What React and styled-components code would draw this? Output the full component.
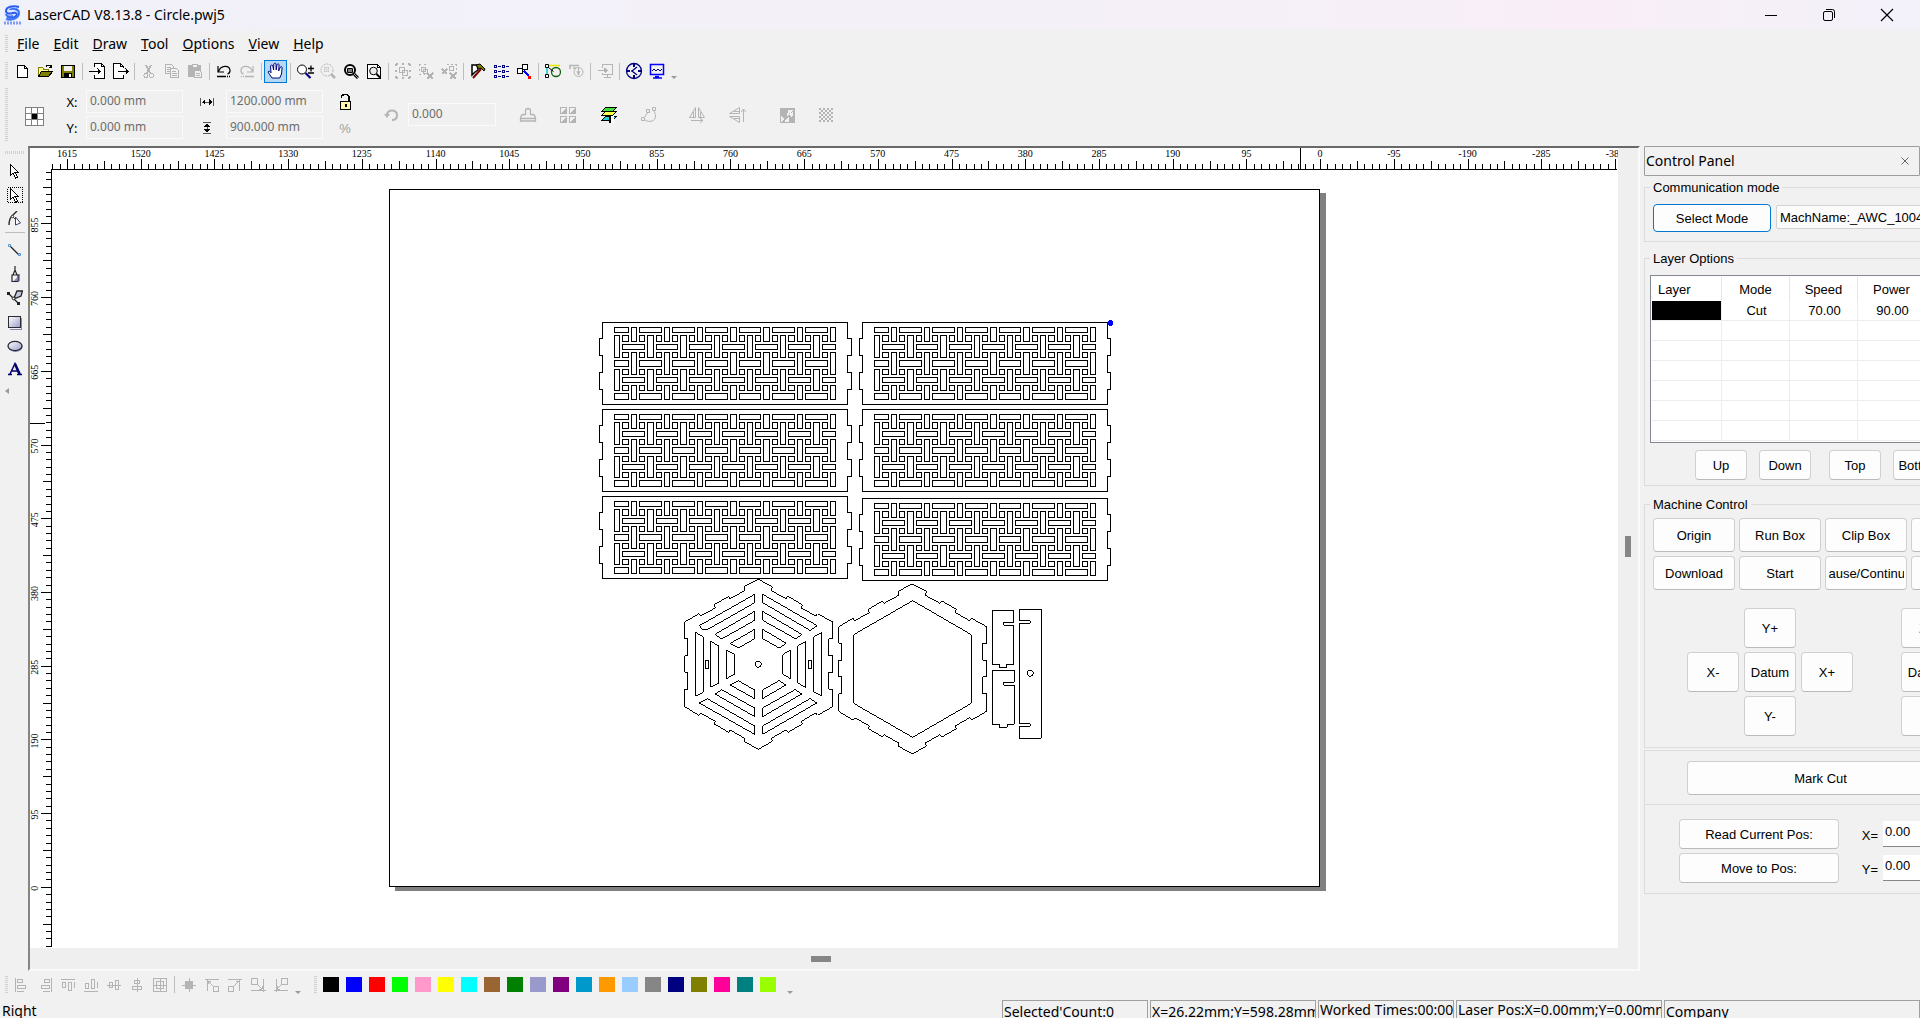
import React from "react";
import styled, { createGlobalStyle, css } from "styled-components";

const UI = `"Noto Sans", "Open Sans", sans-serif`;
const SANS = `"Liberation Sans", Arial, sans-serif`;
const SERIF = `"Liberation Serif", "Times New Roman", serif`;
const FACE = "#f1f1f1";
const OFF = "#b4b4b4";

const GlobalStyle = createGlobalStyle`
  *, *::before, *::after { box-sizing: border-box; }
  body { margin: 0; background: ${FACE}; font-family: ${UI}; font-size: 14px; color: #000; }
  button, input { font: inherit; color: inherit; }
`;

/* ---------- window shell ---------- */

const Window = styled.div`
  display: flex;
  flex-direction: column;
  height: 100vh;
  overflow: hidden;
`;

const TitleBar = styled.header`
  display: flex;
  align-items: center;
  height: 29px;
  flex: none;
  padding-right: 4px;
  background: linear-gradient(90deg, #f1f1f9 0%, #f5f0f8 65%, #f9eef7 83%, #f5f0f8 92%, #f3f1fa 100%);
`;

const AppTitle = styled.h1`
  margin: 0 auto 0 4px;
  font-size: 14px;
  line-height: 20px;
  font-weight: 400;
`;

const CaptionButton = styled.button`
  width: 58px;
  height: 29px;
  padding: 0;
  border: 0;
  background: none;
  display: grid;
  place-items: center;
`;

const LogoBox = styled.span`
  display: grid;
  padding: 2px 0 0 3px;
`;

const MenuBar = styled.nav`
  display: flex;
  align-items: center;
  height: 30px;
  flex: none;
  padding-left: 5px;
`;

const MenuList = styled.div`
  display: flex;
  padding-left: 2px;
`;

const MenuItem = styled.button`
  border: 0;
  background: none;
  padding: 0 7px;
  font-size: 14px;
  line-height: 22px;
`;

const Grip = styled.span`
  flex: none;
  ${(p) =>
    p.$flat
      ? css`
          width: 20px;
          height: 3px;
          margin-bottom: 5px;
          background: repeating-linear-gradient(90deg, #cfcfcf 0 1px, transparent 1px 2px);
        `
      : css`
          width: 3px;
          height: ${p.$size || 18}px;
          margin-right: ${p.$after || 0}px;
          background: repeating-linear-gradient(180deg, #cfcfcf 0 1px, transparent 1px 2px);
        `}
`;

const Toolbar = styled.div`
  display: flex;
  align-items: center;
  height: 24px;
  flex: none;
  padding-left: 5px;
`;

const ToolButton = styled.button`
  flex: none;
  width: 23px;
  height: 23px;
  padding: 0;
  display: grid;
  place-items: center;
  border: 1px solid ${(p) => (p.$on ? "#0078d7" : "transparent")};
  background: ${(p) => (p.$on ? "#b5d9f3" : "none")};
`;

const Divider = styled.span`
  flex: none;
  background: #bdbdbd;
  ${(p) => (p.$flat ? "width: 20px; height: 1px; margin: 1px 0 5px;" : "width: 1px; height: 17px; margin: 0 2px 0 3px;")}
`;

const More = styled.button`
  align-self: ${(p) => (p.$start ? "flex-start" : "flex-end")};
  width: 12px;
  height: 10px;
  margin: ${(p) => (p.$start ? "4px 0 0" : p.$after ? `0 ${p.$after}px 0 0` : "0")};
  padding: 0;
  border: 0;
  background: none;
  display: grid;
  place-items: center;
`;

/* ---------- property bar ---------- */

const PropertyBar = styled.div`
  display: flex;
  align-items: center;
  height: 63px;
  flex: none;
  padding-left: 5px;
`;

const AnchorGrid = styled.div`
  margin: 4px 17px 0;
  display: grid;
`;

const FieldGrid = styled.div`
  display: grid;
  grid-template-columns: ${(p) => p.$label}px 97px;
  grid-auto-rows: 23px;
  gap: 3px 0;
  align-items: center;
  margin-right: ${(p) => p.$after}px;
`;

const FieldLabel = styled.label`
  display: grid;
  place-items: center;
  font-size: 13px;
  line-height: 18px;
  padding-right: ${(p) => p.$pad || 0}px;
`;

const ValueField = styled.input`
  width: ${(p) => p.$width || 97}px;
  height: 23px;
  padding: 0 0 3px 3px;
  border: 1px solid #fafafa;
  background: #f0f0f0;
  color: #6d6d6d;
  font-size: 12px;
`;

const SideStack = styled.div`
  display: grid;
  justify-items: center;
  gap: 12px;
  width: 22px;
  margin-right: 28px;
  font-family: ${SANS};
  font-size: 13px;
  line-height: 14px;
  color: #a0a0a0;
`;

const RotateLabel = styled.label`
  display: grid;
  margin-right: 8px;
`;

const PropTools = styled.div`
  display: flex;
  align-items: center;
  padding-left: 20px;
`;

const PropButton = styled(ToolButton)`
  margin-right: ${(p) => p.$gap || 16}px;
`;

/* ---------- workspace ---------- */

const Workspace = styled.main`
  flex: 1;
  min-height: 0;
  display: grid;
  grid-template-columns: 28px minmax(0, 1fr) 280px;
`;

const ToolBox = styled.aside`
  display: flex;
  flex-direction: column;
  align-items: center;
  padding-top: 5px;
  padding-left: 1px;
`;

const BoxButton = styled(ToolButton)`
  height: 24px;
`;

const CanvasFrame = styled.section`
  display: grid;
  grid-template-columns: 22px minmax(0, 1fr) 20px;
  grid-template-rows: 22px minmax(0, 1fr) 21px;
  border: 2px solid;
  border-color: #696969 #fafafa #fafafa #858585;
  background: #efefef;
`;

const TopRuler = styled.div`
  grid-column: 1 / 3;
  overflow: hidden;
`;

const SideRuler = styled.div`
  grid-column: 1;
  min-height: 0;
  overflow: hidden;
`;

const Sheet = styled.div`
  grid-column: 2;
  min-height: 0;
  overflow: hidden;
`;

const Surface = styled.svg`
  display: block;
  width: 100%;
  height: 100%;
  background: #fff;
  shape-rendering: crispEdges;
`;

const RulerText = styled.text`
  font-family: ${SERIF};
  font-size: 10px;
  text-anchor: middle;
`;

const VScroll = styled.div`
  grid-column: 3;
  grid-row: 1 / 3;
  display: flex;
  flex-direction: column;
  align-items: center;
  &::before { content: ""; flex: 388; }
  &::after { content: ""; flex: 391; }
`;

const HScroll = styled.div`
  grid-column: 1 / 3;
  display: flex;
  align-items: center;
  &::before { content: ""; flex: 781; }
  &::after { content: ""; flex: 787; }
`;

const Thumb = styled.span`
  background: #868686;
  width: ${(p) => (p.$vertical ? 6 : 20)}px;
  height: ${(p) => (p.$vertical ? 21 : 6)}px;
`;

/* ---------- control panel ---------- */

const Panel = styled.aside`
  min-width: 0;
  overflow: hidden;
  padding-left: 4px;
  font-family: ${SANS};
  font-size: 13px;
`;

const PanelHeader = styled.div`
  display: flex;
  align-items: center;
  justify-content: space-between;
  height: 30px;
  margin-bottom: 2px;
  padding: 0 8px 0 1px;
  border: 1px solid #9d9d9d;
  border-radius: 1px;
`;

const PanelTitle = styled.h2`
  margin: 0;
  font-family: ${UI};
  font-size: 14px;
  line-height: 20px;
  font-weight: 400;
`;

const CloseButton = styled.button`
  width: 12px;
  height: 12px;
  padding: 0;
  border: 0;
  background: none;
  display: grid;
  place-items: center;
`;

const Group = styled.fieldset`
  width: 352px;
  min-width: 0;
  margin: 0 0 ${(p) => p.$after}px;
  padding: ${(p) => p.$pad};
  border: 1px solid #dcdcdc;
`;

const Legend = styled.legend`
  height: 18px;
  line-height: 20px;
  padding: 0 3px;
  margin-left: ${(p) => (p.$flush ? 0 : -3)}px;
`;

const PlainGroup = styled.div`
  width: 352px;
  padding: ${(p) => p.$pad};
  border: 1px solid #dcdcdc;
  border-bottom-width: ${(p) => (p.$open ? 0 : 1)}px;
`;

const Row = styled.div`
  display: flex;
  align-items: flex-start;
  gap: ${(p) => p.$gap || 4}px;
  padding: ${(p) => p.$pad || 0};
`;

const PushButton = styled.button`
  flex: none;
  display: flex;
  align-items: center;
  justify-content: center;
  width: ${(p) => p.$w}px;
  height: ${(p) => p.$h}px;
  padding: 1px 0 0;
  overflow: hidden;
  white-space: nowrap;
  line-height: 18px;
  border: 1px solid ${(p) => (p.$focus ? "#0078d4" : "#d0d0d0")};
  border-bottom-color: ${(p) => (p.$focus ? "#0078d4" : "#bababa")};
  border-radius: 4px;
  background: #fdfdfd;
`;

const TightLabel = styled.span`
  display: flex;
  justify-content: center;
  width: 76px;
  overflow: hidden;
`;

const MachineName = styled.input`
  flex: none;
  width: 180px;
  height: 24px;
  margin-top: 1px;
  padding: 0 3px;
  border: 1px solid #d2d2d2;
  border-radius: 2px;
  background: #fbfbfb;
`;

const LayerBox = styled.div`
  width: 290px;
  height: 168px;
  margin-bottom: 7px;
  padding: 1px;
  border: 1px solid #828790;
  background: #fff;
`;

const LayerTable = styled.table`
  width: 274px;
  table-layout: fixed;
  border-collapse: separate;
  border-spacing: 0;
`;

const Head = styled.th`
  width: ${(p) => p.$w}px;
  height: 24px;
  padding: ${(p) => (p.$left ? "0 0 0 6px" : "0")};
  text-align: ${(p) => (p.$left ? "left" : "center")};
  font-weight: 400;
  border-right: 1px solid #e5e5e5;
`;

const Cell = styled.td`
  height: 20px;
  padding: 1px 0 0 2px;
  line-height: 18px;
  text-align: center;
  border-right: 1px solid #ededed;
  border-bottom: 1px solid #ededed;
  background: ${(p) => (p.$ink ? "#000" : "#fff")};
`;

const JogArea = styled.div`
  display: flex;
  gap: 48px;
  padding: 14px 0 0 34px;
`;

const JogPad = styled.div`
  display: grid;
  grid-template-columns: repeat(${(p) => p.$cols}, 52px);
  grid-template-rows: repeat(3, 40px);
  gap: 4px 5px;
  > :nth-child(1) { grid-column: ${(p) => (p.$cols === 3 ? 2 : 1)}; }
  > :nth-child(2) { grid-column: 1; }
  > :nth-child(5) { grid-column: 2; }
`;

const Rows = styled.div`
  display: grid;
  gap: 4px;
`;

const PosRow = styled.div`
  display: flex;
  align-items: center;
`;

const PosLabel = styled.label`
  width: 44px;
  padding: 4px 5px 0 0;
  text-align: right;
  line-height: 18px;
`;

const PosInput = styled.input`
  width: 80px;
  height: 26px;
  padding: 0 2px 5px;
  border: 0;
  border-bottom: 1px solid #868686;
  background: #fff;
`;

/* ---------- bottom ---------- */

const BottomBar = styled.div`
  display: flex;
  align-items: center;
  height: 29px;
  flex: none;
  padding: 0 0 2px 5px;
`;

const Swatches = styled.div`
  display: flex;
  gap: 7px;
  padding: 0 8px 0 6px;
`;

const Swatch = styled.button`
  width: 16px;
  height: 15px;
  padding: 0;
  border: 0;
  background: ${(p) => p.$color};
`;

const StatusBar = styled.footer`
  display: grid;
  grid-template-columns: minmax(0, 1fr) 146px 166px 136px 206px 256px;
  gap: 2px;
  height: 18px;
  flex: none;
  overflow: hidden;
  font-size: 14px;
  line-height: 22px;
`;

const StatusCell = styled.span`
  height: 24px;
  overflow: hidden;
  white-space: nowrap;
  padding-left: 1px;
  border: 1px solid ${(p) => (p.$bare ? "transparent" : "#a0a0a0")};
  ${(p) => p.$raised && "line-height: 18px;"}
  ${(p) => p.$bare && "line-height: 19px;"}
`;

/* ---------- icons ---------- */

function Icon({ size = 16, children, stroke = "#000", smooth }) {
  return (
    <svg
      width={size}
      height={size}
      viewBox={`0 0 ${size} ${size}`}
      fill="none"
      stroke={stroke}
      shapeRendering={smooth ? "auto" : "crispEdges"}
      aria-hidden="true"
    >
      {children}
    </svg>
  );
}

const down = (
  <svg width="6" height="4" viewBox="0 0 6 4" aria-hidden="true"><path d="M0 0h6L3 3z" fill="#9a9a9a" /></svg>
);

const CURSOR = "M3.5 1.5v11l2.5-2.5 2.5 5 2-1-2.500-4.500h3.500z";

const ICONS = {
  new: <Icon><path d="M3.5 2.500h7l3 3v9h-10z" fill="#fff" /><path d="M10.500 2.500v3h3" /></Icon>,
  open: (
    <Icon>
      <path d="M1.500 13.500v-9h4l1 1.500h5v3" fill="#ffff9c" stroke="#808000" />
      <path d="M1.500 13.500l3-5h11l-4 5z" fill="#808000" />
      <path d="M9 3.500l2-1.500h2l1.500 2M14.500 1.500v3h-3" />
    </Icon>
  ),
  save: (
    <Icon>
      <rect x="1.500" y="2.500" width="13" height="12" fill="#808000" />
      <rect x="4" y="3" width="8" height="5" fill="#f1f1f1" stroke="none" />
      <rect x="4" y="10" width="8" height="4" fill="#000" stroke="none" />
      <rect x="9" y="11" width="2" height="3" fill="#fff" stroke="none" />
    </Icon>
  ),
  import: <Icon size={18}><path d="M6.500 5V1.500h7l3 3v12h-10V13" fill="#fff" /><path d="M13.500 1.500v3h3M1 9.500h11M9.500 6.500l3 3-3 3M10.500 7.500v4" /></Icon>,
  export: <Icon size={18}><path d="M12.500 6V4.500l-3-3h-7v15h10V13" fill="#fff" /><path d="M9.500 1.500v3h3M7 9.500h10M14.500 6.500l3 3-3 3M15.500 7.500v4" /></Icon>,
  cut: <Icon stroke={OFF}><path d="M5 2l4 8M10 2l-4 8" strokeWidth="1.5" /><circle cx="5" cy="12.500" r="2" /><circle cx="10.500" cy="12.500" r="2" /></Icon>,
  copy: <Icon stroke={OFF}><path d="M1.500 1.500h6l2 2v7h-8zM3 4.500h4M3 6.500h5M3 8.500h5" /><path d="M6.500 5.500h6l2 2v7h-8z" fill={FACE} /><path d="M8 8.500h4M8 10.500h5M8 12.500h5" /></Icon>,
  paste: <Icon stroke={OFF}><path d="M1.500 2.500h12v11h-12z" fill={OFF} /><path d="M5 1.500h5v3H5z" fill={FACE} /><path d="M7.500 7.500h5l2 2v5h-7z" fill={FACE} /><path d="M9 10.500h4M9 12.500h4" /></Icon>,
  undo: <Icon smooth><path d="M2 3v6h6M2.500 8.500C5 2 13 2 14 7c.3 2.500-1 3.500-2.500 4" strokeWidth="1.200" /><path d="M1 13.500h9M11 13.500h1M13 13.500h1" strokeWidth="1.500" /></Icon>,
  redo: <Icon smooth stroke={OFF}><path d="M14 3v6H8M13.500 8.500C11 2 3 2 2 7c-.3 2.500 1 3.500 2.500 4" strokeWidth="1.200" /><path d="M6 13.500h9M4 13.500h1M2 13.500h1" strokeWidth="1.500" /></Icon>,
  pan: (
    <Icon size={18} stroke="#00007c" smooth>
      <path d="M5 16c-1-2-3-4-4-6 .5-1.500 2-.8 3 .8L3.500 4c.8-1.500 2-1 2.300 0l.8 4L6.800 2c.8-1.300 2-1 2.200 0l.2 6 .9-5.500c.9-1 2-.6 2 .5l-.5 6 1.800-4c1-.8 1.800-.2 1.700.8L14.500 12l-1.800 4z" fill="#fff" />
    </Icon>
  ),
  zoom: <Icon size={18} smooth><circle cx="6" cy="7.500" r="4.500" fill="#fff" /><path d="M9.500 11l5 5" stroke="#000080" strokeWidth="2.200" /><path d="M12 6.500h6M15 3.500v6M12 11h6" strokeWidth="1.300" /></Icon>,
  zoomSel: <Icon smooth stroke={OFF}><circle cx="7" cy="7" r="6" strokeDasharray="2 1" /><path d="M4 5h6M4 8h6M5 4v6M8 4v6" strokeDasharray="1 1" /><path d="M11 11l4 4" strokeWidth="2.500" /></Icon>,
  zoomObj: <Icon smooth><circle cx="7" cy="7" r="5" fill="#fff" strokeWidth="2" /><path d="M4.500 5.500h5v4h-5z" fill="#808080" /><path d="M11 11l4 4" strokeWidth="3" /><path d="M11 11l4 4" stroke="#aaa" strokeWidth="1" /></Icon>,
  zoomPage: <Icon><path d="M1.500 1.500h10l3 3v11h-13z" fill="#fff" /><path d="M11.500 1.500v3h3" /><g shapeRendering="auto"><circle cx="7.500" cy="8" r="3.800" fill="#eee" /><path d="M10.500 11l3.500 3.500" strokeWidth="2" /></g></Icon>,
  group: <Icon stroke={OFF}><path d="M4.500 4.500h5v5h-5zM7.500 7.500h5v5h-5z" /><path d="M1 1h14M1 15h14M1 1v14M15 1v14" strokeWidth="2" strokeDasharray="2 4" /></Icon>,
  ungroup: <Icon stroke={OFF}><path d="M3.500 4.500h4v4h-4zM5.500 6.500h4v4h-4z" /><path d="M1 1.500h10M1.500 1v10M1 11.500h6" strokeDasharray="2 3" /><path d="M9 10l6 6M15 10l-6 6" strokeWidth="2" /></Icon>,
  ungroupAll: <Icon stroke={OFF}><path d="M8.500 3.500h4v4h-4z" /><path d="M6 1.500h10M15.500 1v10" strokeDasharray="2 2" /><path d="M1 6l5 5M6 6l-5 5M9 10l6 6M15 10l-6 6" strokeWidth="1.800" /></Icon>,
  hammer: <Icon smooth><path d="M2 2v10l3-3 3-2-1-5z" fill="#fff" strokeWidth="1.500" /><path d="M3 15L11 6" stroke="#800000" strokeWidth="2" /><path d="M6 2l4-1 5 5-1 2-3-3-2 1z" fill="#808000" /></Icon>,
  list: <Icon stroke="#000080"><path d="M1.500 2.500h2v2h-2zM1.500 7.500h2v2h-2zM1.500 12.500h2v2h-2zM9.500 2.500h2v2h-2zM9.500 7.500h2v2h-2zM9.500 12.500h2v2h-2z" /><path d="M5 3.500h3M5 8.500h3M5 13.500h3M13 3.500h3M13 8.500h3M13 13.500h3" /></Icon>,
  nodes: <Icon><path d="M6.500 1.500h5v5h-5zM1.500 5.500h5v5h-5z" fill="#fff" /><path d="M8 8l5 5" stroke="#00f" strokeWidth="1.500" /><path d="M12 13h3v3h-3z" fill="red" stroke="none" /></Icon>,
  path: <Icon size={18} smooth><circle cx="12" cy="10" r="4.500" stroke="#106010" strokeWidth="1.300" /><path d="M3 3.500h13" stroke="#e8e800" strokeWidth="1.500" /><path d="M3 6v7" stroke="#0cc" strokeWidth="1.500" /><path d="M1.500 2.500h3v3h-3zM1.500 12.500h3v3h-3z" fill="#fff" /><path d="M4.500 5.500l5 4" /></Icon>,
  timer: <Icon stroke={OFF} smooth><path d="M1 2.500h10M2 2v4M5 5h3" strokeWidth="1.500" /><circle cx="10.500" cy="9" r="4.500" /><path d="M10.500 5v6M9 8l1.500 4L12 8" /></Icon>,
  screenIn: <Icon stroke={OFF}><path d="M5.500 5V1.500h10v10h-10V10M1 7.500h8M7.500 5.500l2 2-2 2M10.500 12v2M7 14.500h7" strokeWidth="1.500" /></Icon>,
  target: <Icon size={18} smooth stroke="#000080"><circle cx="9" cy="9" r="7.500" strokeWidth="1.300" /><path d="M9 1v4M9 13v4M1 9h4M13 9h4" strokeWidth="2" /><path d="M7 9l5-4M7 9l5 4M7 8v2" strokeWidth="1.300" /></Icon>,
  monitor: <Icon stroke="#00f" smooth><path d="M1.500 1.500h13v10h-13z" strokeWidth="1.500" /><path d="M3 8l2-2 2 2 2-2 2 2 2-2" stroke="#000080" /><path d="M6 13.500h4M4 15h9" strokeWidth="1.500" /></Icon>,
  stamp: <Icon size={18} smooth stroke={OFF}><path d="M6.500 8.500V5a2.500 2.500 0 0 1 5 0v3.500h2c2.500 0 3 4 3 4h-15s.500-4 3-4zM1.500 12.500v2.500h15v-2.500" strokeWidth="1.300" /></Icon>,
  array: <Icon size={18} stroke={OFF}>{[[1, 1], [10, 1], [1, 10], [10, 10]].map(([x, y]) => <g key={`${x}-${y}`}><rect x={x + 0.5} y={y + 0.5} width="6" height="6" /><path d={`M${x} ${y + 7}l7-7v7z`} fill={OFF} stroke="none" /></g>)}</Icon>,
  layers: (
    <Icon size={18}>
      <path d="M5.500 1.500h11l-4 4h-11z" fill="#40e040" />
      <path d="M5.500 5.500h11l-4 4h-11z" fill="#ffff50" />
      <path d="M5.500 10.500h11l-4 4h-11z" fill="#20d0d0" />
      <path d="M9.500 9v8" strokeWidth="2" /><path d="M11 10h3v7h-3z" fill="#fff" stroke="none" />
    </Icon>
  ),
  rotateNode: <Icon size={18} smooth stroke={OFF}><path d="M1.500 11.500h3v3h-3zM12.500 1.500h3v3h-3zM6.500 3.500h3v3h-3zM5 14c4 3 11 1 10.500-4 0-2-1-4-1.500-5M5 11c1-3 3-5 5-5" /></Icon>,
  flipH: <Icon size={18} smooth stroke={OFF}><path d="M7.500 1.500v10h-6zM10.500 1.500v10h6zM5.500 6v5M12.500 6v5M3 14.500h12M12 12l3 2.500-3 2.500" /></Icon>,
  flipV: <Icon size={18} smooth stroke={OFF}><path d="M1.500 7.500h10v-6zM1.500 10.500h10v6zM6 5.500h5M6 12.500h5M15.500 16V3M13 6l2.500-3L18 6" /></Icon>,
  invert: <Icon stroke={OFF}><path d="M1 1h14v14H1z" fill={OFF} /><path d="M9 3h5l-6 6zM2 9l3 3-3 3zM7 12l3-2v5H6zM9 7l3 3 2-1V5z" fill={FACE} stroke="none" /></Icon>,
  checker: (
    <Icon>
      {Array.from({ length: 49 }, (_, i) => i).filter((i) => i % 2 === 0).map((i) => (
        <rect key={i} x={1 + (i % 7) * 2} y={1 + Math.floor(i / 7) * 2} width="2" height="2" fill={OFF} stroke="none" />
      ))}
    </Icon>
  ),
  arrow: <Icon><path d={CURSOR} fill="#fff" /></Icon>,
  marquee: <Icon><path d="M.5.500h15v15H.500z" strokeDasharray="1 1" /><path d={CURSOR} fill="#fff" /></Icon>,
  nodeEdit: <Icon smooth stroke="#333"><path d="M2 14c0-4 1-7 3-9l5-5" strokeWidth="1.500" /><path d="M5 5l5 5" /><path d="M8.500 6v8l5-2z" fill="#fff" stroke="#3c3c70" /><circle cx="5.500" cy="5.500" r="1.200" fill="#fff" /></Icon>,
  line: <Icon smooth><path d="M3 4l9 9" stroke="#222" strokeWidth="1.300" /><path d="M1.500 2.500h2v2h-2zM11.500 11.500h2v2h-2z" stroke="#5b94cc" /></Icon>,
  pen: <Icon smooth stroke="#222"><path d="M8 15h5V8h-2z" fill="#8c8cc4" stroke="none" /><path d="M8 0v4M8 4L6 9H5v6.500h6V9h-1zM6 9h4M7 5.500h2" fill="#f4f4fa" strokeWidth="1.200" /><path d="M6.500 15l4-4v4z" fill="#8c8cc4" stroke="none" /></Icon>,
  bezier: <Icon smooth stroke="#222"><path d="M1.500 3.500l10 10" strokeWidth="1.300" /><path d="M0 2h3v3H0zM10 12h3v3h-3z" fill="#222" stroke="none" /><path d="M7 8l3-7h5.500l-1.500 5-5 2z" fill="#c8c8e0" strokeWidth="1.300" /><circle cx="6.500" cy="8.500" r="1.300" fill="#fff" /></Icon>,
  rect: <Icon><defs><linearGradient id="shade" x1="0" y1="0" x2="1" y2="1"><stop offset="0" stopColor="#fff" /><stop offset="1" stopColor="#9c9ccc" /></linearGradient></defs><path d="M3 15h11V4" stroke="#8888b8" /><rect x="1.500" y="2.500" width="12" height="11" fill="url(#shade)" stroke="#2a2a33" /></Icon>,
  ellipse: <Icon smooth><ellipse cx="8.500" cy="9" rx="7" ry="5" fill="#8888b8" stroke="none" /><ellipse cx="8" cy="8" rx="7" ry="4.700" fill="url(#shade)" stroke="#2a2a33" strokeWidth="1.300" /></Icon>,
  text: <Icon smooth stroke="#00006c"><path d="M1 12.500h4M10 12.500h5M3 12L8 1.500 13 12M5 9h6" strokeWidth="1.500" /><path d="M8 2l4.500 10" strokeWidth="2.500" /></Icon>,
};

const ALIGN = [
  ["Align left", "M1.500 1v14M3.500 2.500h5v3h-5zM3.500 8.500h8v3h-8zM3 14h7"],
  ["Align right", "M14.500 1v14M7.500 2.500h5v3h-5zM4.500 8.500h8v3h-8zM6 14h7"],
  ["Align top", "M1 2h14M2.500 5.500h3v5h-3zM8.500 5.500h3v8h-3zM14 5v6"],
  ["Align bottom", "M1 14h14M2.500 6.500h3v5h-3zM8.500 2.500h3v9h-3zM14 5v6"],
  ["Center vertically", "M1 8h14M3.500 5.500h3v5h-3zM9.500 3.500h3v9h-3z"],
  ["Center horizontally", "M8 1v14M5.500 3.500h5v3h-5zM3.500 9.500h9v3h-9z"],
  ["Center both", "M1.500 1.500h13v13h-13zM8 1v14M1 8h14M4.500 4.500h7v7h-7z"],
];
const PLACE = [
  ["Page center", "M8 1v14M1 8h14M4.500 4.500h7v7h-7z", true],
  ["Page top left", "M1 2.500h14M3.500 2v12M4 4l5 5M4 4h3M4 4v3M9.500 9.500h5v5h-5z"],
  ["Page top right", "M1 2.500h14M12.500 2v12M12 4L7 9M12 4H9M12 4v3M1.500 9.500h5v5h-5z"],
  ["Page bottom right", "M1 13.500h15M13.500 2v13M12 12L8 8M12 12H9M12 12V9M1.500 1.500h6v6h-6z"],
  ["Page bottom left", "M1 13.500h14M3.500 2v13M4 12l4-4M4 12h3M4 12V9M8.500 1.500h6v6h-6z"],
];

const TOOL_GROUPS = [
  [["New", "new"], ["Open", "open"], ["Save", "save"]],
  [["Import", "import"], ["Export", "export"]],
  [["Cut", "cut"], ["Copy", "copy"], ["Paste", "paste"]],
  [["Undo", "undo"], ["Redo", "redo"]],
  [["Pan", "pan", true]],
  [["Zoom", "zoom"], ["Zoom selection", "zoomSel"], ["Zoom objects", "zoomObj"], ["Zoom page", "zoomPage"]],
  [["Group", "group"], ["Ungroup", "ungroup"], ["Ungroup all", "ungroupAll"]],
  [["Options", "hammer"], ["List", "list"], ["Node order", "nodes"]],
  [["Path", "path"], ["Work time", "timer"]],
  [["Send", "screenIn"]],
  [["Locate", "target"], ["Preview", "monitor"]],
];

const LEFT_TOOLS = [
  ["Select", "arrow"],
  ["Marquee select", "marquee"],
  ["Edit nodes", "nodeEdit"],
  null,
  ["Line", "line"],
  ["Pen", "pen"],
  ["Bezier", "bezier"],
  ["Rectangle", "rect"],
  ["Ellipse", "ellipse"],
  ["Text", "text"],
];

const PROP_TOOLS = [
  ["Stamp", "stamp", 17],
  ["Array", "array", 18],
  ["Layers", "layers", 17],
  ["Rotate nodes", "rotateNode", 25],
  ["Mirror horizontally", "flipH", 17],
  ["Mirror vertically", "flipV", 27],
  ["Invert", "invert", 16],
  ["Dither", "checker", 16],
];

const SWATCHES = [
  "#000000", "#0000ff", "#ff0000", "#00ff00", "#ff99cc", "#ffff00", "#00ffff", "#996633", "#008000", "#9999cc",
  "#800080", "#0099cc", "#ff9900", "#99ccff", "#868686", "#000080", "#808000", "#ff0099", "#008080", "#99ff00",
];

/* ---------- rulers and drawing ---------- */

const STEP = 73.71;
const TICK = STEP / 10;
const ORIGIN_X = 1290.6;
const ORIGIN_Y = 717.3;

const tickLength = (i) => (i % 10 === 0 ? 11 : i % 5 === 0 ? 9 : 6);

function HorizontalRuler() {
  const ticks = [];
  for (let i = -40; i <= 172; i += 1) ticks.push(i);
  return (
    <Surface role="img" aria-label="Horizontal ruler">
      <path
        stroke="#000"
        d={ticks
          .map((i) => [Math.floor(ORIGIN_X - i * TICK) + 0.5, i])
          .filter(([x]) => x > 22)
          .map(([x, i]) => `M${x} 21.500v-${tickLength(i)}`)
          .join("")}
      />
      <path d="M21 21.500H1587M1270.500 0V21" stroke="#000" />
      {Array.from({ length: 22 }, (_, k) => k - 4).map((k) => (
        <RulerText key={k} x={ORIGIN_X - k * STEP - 0.5} y="9">{k * 95}</RulerText>
      ))}
    </Surface>
  );
}

function VerticalRuler() {
  const ticks = [];
  for (let i = -8; i <= 97; i += 1) ticks.push(i);
  return (
    <Surface role="img" aria-label="Vertical ruler">
      <path
        stroke="#000"
        d={ticks.map((i) => `M21.500 ${Math.floor(ORIGIN_Y - i * TICK) + 0.5}h-${tickLength(i)}`).join("")}
      />
      <path d="M21.500 0V777M0 253.500H15" stroke="#000" />
      {Array.from({ length: 10 }, (_, k) => k).map((k) => (
        <RulerText key={k} transform={`translate(8 ${ORIGIN_Y - k * STEP + 1}) rotate(-90)`}>{k * 95}</RulerText>
      ))}
    </Surface>
  );
}

const CELL = 8.3;
const BAR = 5.3;

function weavePath() {
  const parts = [];
  const snap = (n) => Math.round(n);
  const bar = (c0, c1, r0, r1) => {
    const x0 = snap(c0 * CELL);
    const y0 = snap(r0 * CELL);
    const x1 = snap(c1 * CELL + BAR);
    const y1 = snap(r1 * CELL + BAR);
    parts.push(`M${x0} ${y0}H${x1}V${y1}H${x0}z`);
  };
  for (let c = -1; c < 26; c += 4) [0, 4, 8].forEach((r) => bar(Math.max(c, 0), c + 2, r, r));
  for (let c = 1; c < 27; c += 4) [2, 6].forEach((r) => bar(c, Math.min(c + 2, 26), r, r));
  for (let c = 2; c < 27; c += 4) [[0, 1], [3, 5], [7, 8]].forEach(([a, b]) => bar(c, c, a, b));
  for (let c = 0; c < 27; c += 4) [[1, 3], [5, 7]].forEach(([a, b]) => bar(c, c, a, b));
  for (let c = 1; c < 26; c += 2) [1, 3, 5, 7].forEach((r) => bar(c, c, r, r));
  return parts.join("");
}

const WEAVE = weavePath();

function SidePanel({ x, y, tab }) {
  return (
    <g transform={`translate(${x} ${y})`}>
      <path
        d={`M0 0H245V16H${245 + tab}V33H245V50H${245 + tab}V67H245V82H0V67H-3V50H0V33H-3V16H0z`}
      />
      <path d={WEAVE} transform="translate(12 5)" />
    </g>
  );
}

const HEX =
  "265,28 307,50 304,62 348,86 354,79 397,104 394,114 437,138 443,131 488,156 488,206 476,206 476,257 488,257 488,307 476,307 476,358 488,358 488,410 443,436 437,429 394,454 397,462 354,487 348,480 304,505 307,514 265,538 222,514 224,505 180,480 176,487 133,462 136,454 92,429 87,436 44,410 44,358 53,358 53,307 44,307 44,257 53,257 53,206 44,206 44,156 87,131 92,138 136,114 133,104 176,79 180,86 224,62 222,50";

const SLOTS = [
  "278,73 442,167 420,181 278,98",
  "278,124 395,193 378,207 278,151",
  "278,178 349,220 327,234 278,206",
  "254,73 88,167 96,177 112,179 254,98",
  "254,124 135,193 155,207 254,151",
  "254,178 181,220 205,234 254,206",
  "278,493 440,399 420,386 278,468",
  "278,440 395,372 375,359 278,414",
  "278,386 347,345 327,332 278,360",
  "254,493 88,399 112,386 254,468",
  "254,440 135,372 155,359 254,414",
  "254,386 181,345 205,332 254,360",
  "77,187 100,201 100,366 77,379",
  "122,214 146,228 146,339 122,351",
  "170,240 194,254 194,312 170,326",
  "455,187 431,201 431,366 455,378",
  "407,214 383,228 383,339 407,352",
  "361,240 338,254 338,312 361,326",
  "106,271 116,271 116,296 106,296",
  "415,271 425,271 425,296 415,296",
];

const BRACKETS = [
  "967,121 1031,121 1031,157 1001,157 1001,166 1031,166 1031,283 1010,283 1010,292 988,292 988,283 967,283",
  "967,301 1033,301 1033,337 1001,337 1001,346 1033,346 1033,463 1012,463 1012,472 988,472 988,463 967,463",
  "1048,118 1114,118 1114,505 1048,505 1048,469 1081,469 1081,461 1048,461 1048,160 1081,160 1081,152 1048,152",
];

function Drawing() {
  return (
    <Surface role="img" aria-label="Drawing area">
      <g transform="translate(-52 -170)">
        <path d="M395 887h925V193h6v698H395z" fill="#808080" />
        <rect x="389.500" y="189.500" width="930" height="697" fill="#fff" stroke="#000" />
        <g fill="none" stroke="#000">
          <SidePanel x={602.5} y={322.5} tab={4} />
          <SidePanel x={602.5} y={409.5} tab={4} />
          <SidePanel x={602.5} y={496.5} tab={4} />
          <SidePanel x={862.5} y={322.5} tab={3} />
          <SidePanel x={862.5} y={409.5} tab={3} />
          <SidePanel x={862.5} y={498.5} tab={3} />
        </g>
        <g transform="translate(670 570) scale(0.333333)" fill="none" stroke="#000" strokeWidth="3">
          <polygon points={HEX} />
          {SLOTS.map((p) => <polygon key={p} points={p} />)}
          <circle cx="265" cy="283" r="9" />
          <g transform="translate(462 14)"><polygon points={HEX} /></g>
          <polygon points="728,92 904,194 904,400 728,502 551,400 551,194" />
          {BRACKETS.map((p) => <polygon key={p} points={p} />)}
          <circle cx="1081" cy="310" r="9" />
        </g>
        <path d="M1109 320h2l2 2v2l-2 2h-2l-2-2v-2z" fill="#00f" />
      </g>
    </Surface>
  );
}

/* ---------- page ---------- */

const MENUS = ["File", "Edit", "Draw", "Tool", "Options", "View", "Help"];

export default function App() {
  return (
    <Window>
      <GlobalStyle />
      <TitleBar>
        <LogoBox>
          <svg width="20" height="21" viewBox="0 0 20 21" fill="none" aria-hidden="true">
            <circle cx="9" cy="8" r="8" fill="#dfe8ff" />
            <path d="M16 2C10 0 3 2 3 6c0 3 4 3 7 2s5 1 3 3-6 2-9 1" stroke="#2b5cf0" strokeWidth="2" />
            <path d="M14 5c-4-2-7-1-7 0M3 9c1 3 4 3 7 2M3 14c6 2 13-1 13-6 0-2-1-3-3-4" stroke="#3c72f5" strokeWidth="2" />
            <path d="M1 18h17" stroke="#7f9cf0" strokeWidth="3" strokeDasharray="2 1" />
          </svg>
        </LogoBox>
        <AppTitle>LaserCAD V8.13.8 - Circle.pwj5</AppTitle>
        <CaptionButton aria-label="Minimize"><Icon><path d="M2 8.500h12" /></Icon></CaptionButton>
        <CaptionButton aria-label="Restore">
          <Icon smooth><rect x="2.500" y="4.500" width="9" height="9" rx="1.500" /><path d="M5 2.500h6.500a2 2 0 0 1 2 2V11" /></Icon>
        </CaptionButton>
        <CaptionButton aria-label="Close"><Icon smooth><path d="M2 2l12 12M14 2L2 14" strokeWidth="1.200" /></Icon></CaptionButton>
      </TitleBar>

      <MenuBar aria-label="Main menu">
        <Grip />
        <MenuList>
          {MENUS.map((m) => (
            <MenuItem key={m}><u>{m[0]}</u>{m.slice(1)}</MenuItem>
          ))}
        </MenuList>
      </MenuBar>

      <Toolbar role="toolbar" aria-label="Standard">
        <Grip $after={2} />
        {TOOL_GROUPS.map((group, gi) => (
          <React.Fragment key={group[0][0]}>
            {gi > 0 && <Divider />}
            {group.map(([label, icon, on]) => (
              <ToolButton key={label} aria-label={label} $on={on}>{ICONS[icon]}</ToolButton>
            ))}
          </React.Fragment>
        ))}
        <More aria-label="More tools">{down}</More>
      </Toolbar>

      <PropertyBar>
        <Grip $size={53} />
        <AnchorGrid>
          <svg width="20" height="20" viewBox="0 0 20 20" shapeRendering="crispEdges" role="img" aria-label="Anchor point">
            <path d="M.500.500h18v18H.500zM6.500 0v19M12.500 0v19M0 6.500h19M0 12.500h19" fill="#fff" stroke="#808080" />
            <rect x="7" y="7" width="5" height="5" />
          </svg>
        </AnchorGrid>
        <FieldGrid $label={24} $after={9}>
          <FieldLabel htmlFor="pos-x" $pad={4}>X:</FieldLabel>
          <ValueField id="pos-x" defaultValue="0.000 mm" />
          <FieldLabel htmlFor="pos-y" $pad={4}>Y:</FieldLabel>
          <ValueField id="pos-y" defaultValue="0.000 mm" />
        </FieldGrid>
        <FieldGrid $label={34} $after={11}>
          <FieldLabel htmlFor="size-w" aria-label="Width" $pad={4}>
            <Icon><path d="M1.500 4v8M14.500 4v8M3 8h10" stroke="#555" /><path d="M3 8l3-3v6zM13 8l-3-3v6z" fill="#000" stroke="none" /></Icon>
          </FieldLabel>
          <ValueField id="size-w" defaultValue="1200.000 mm" />
          <FieldLabel htmlFor="size-h" aria-label="Height" $pad={4}>
            <Icon><path d="M4 2.500h8M4 13.500h8M8 4v8" stroke="#555" /><path d="M8 3l3 4H5zM8 13l3-4H5z" fill="#000" stroke="none" /></Icon>
          </FieldLabel>
          <ValueField id="size-h" defaultValue="900.000 mm" />
        </FieldGrid>
        <SideStack>
          <Icon><path d="M4 3.500c1-4 8-4 8 .500v3" strokeWidth="1.500" /><rect x="3.500" y="7.500" width="10" height="8" fill="#fff3b0" /><path d="M8.500 10v3" strokeWidth="2" /></Icon>
          <span>%</span>
        </SideStack>
        <RotateLabel htmlFor="angle" aria-label="Rotation">
          <Icon stroke={OFF} smooth><path d="M3 8c0-6 10-6 10 0 0 3-2 5-5 5" strokeWidth="2" /><path d="M0 7h6l-3 4z" fill={OFF} stroke="none" /></Icon>
        </RotateLabel>
        <ValueField id="angle" $width={88} defaultValue="0.000" />
        <PropTools>
          {PROP_TOOLS.map(([label, icon, gap]) => (
            <PropButton key={label} aria-label={label} $gap={gap}>{ICONS[icon]}</PropButton>
          ))}
        </PropTools>
      </PropertyBar>

      <Workspace>
        <ToolBox role="toolbar" aria-label="Drawing tools">
          <Grip $flat />
          {LEFT_TOOLS.map((t) =>
            t ? (
              <BoxButton key={t[0]} aria-label={t[0]}>{ICONS[t[1]]}</BoxButton>
            ) : (
              <Divider key="divider" $flat />
            )
          )}
          <More $start aria-label="More drawing tools">
            <svg width="4" height="6" viewBox="0 0 4 6" aria-hidden="true"><path d="M4 0v6L0 3z" fill="#9a9a9a" /></svg>
          </More>
        </ToolBox>

        <CanvasFrame>
          <TopRuler><HorizontalRuler /></TopRuler>
          <SideRuler><VerticalRuler /></SideRuler>
          <Sheet><Drawing /></Sheet>
          <VScroll><Thumb $vertical /></VScroll>
          <HScroll><Thumb /></HScroll>
        </CanvasFrame>

        <Panel>
          <PanelHeader>
            <PanelTitle>Control Panel</PanelTitle>
            <CloseButton aria-label="Close panel">
              <svg width="8" height="8" viewBox="0 0 8 8" aria-hidden="true"><path d="M.5.500l7 7M7.500.500l-7 7" stroke="#666" /></svg>
            </CloseButton>
          </PanelHeader>

          <Group $after={7} $pad="8px 8px 9px">
            <Legend>Communication mode</Legend>
            <Row $gap={5}>
              <PushButton $w={118} $h={28} $focus>Select Mode</PushButton>
              <MachineName aria-label="Machine" defaultValue="MachName:_AWC_1004" />
            </Row>
          </Group>

          <Group $after={9} $pad="8px 5px 5px">
            <Legend $flush>Layer Options</Legend>
            <LayerBox>
              <LayerTable>
                <thead>
                  <tr>
                    <Head $w={70} $left>Layer</Head>
                    <Head $w={68}>Mode</Head>
                    <Head $w={68}>Speed</Head>
                    <Head $w={68}>Power</Head>
                  </tr>
                </thead>
                <tbody>
                  <tr><Cell $ink /><Cell>Cut</Cell><Cell>70.00</Cell><Cell>90.00</Cell></tr>
                  {[1, 2, 3, 4, 5, 6].map((r) => (
                    <tr key={r}><Cell /><Cell /><Cell /><Cell /></tr>
                  ))}
                </tbody>
              </LayerTable>
            </LayerBox>
            <Row $gap={12} $pad="0 0 0 45px">
              <PushButton $w={52} $h={30}>Up</PushButton>
              <Row $gap={18}>
                <PushButton $w={52} $h={30}>Down</PushButton>
                <PushButton $w={52} $h={30}>Top</PushButton>
              </Row>
              <PushButton $w={52} $h={30}>Bottom</PushButton>
            </Row>
          </Group>

          <Group $after={2} $pad="5px 8px 11px">
            <Legend>Machine Control</Legend>
            <Rows>
              <Row>
                <PushButton $w={82} $h={34}>Origin</PushButton>
                <PushButton $w={82} $h={34}>Run Box</PushButton>
                <PushButton $w={82} $h={34}>Clip Box</PushButton>
                <PushButton $w={82} $h={34} aria-label="Cut box" />
              </Row>
              <Row>
                <PushButton $w={82} $h={34}>Download</PushButton>
                <PushButton $w={82} $h={34}>Start</PushButton>
                <PushButton $w={82} $h={34}><TightLabel>Pause/Continue</TightLabel></PushButton>
                <PushButton $w={82} $h={34} aria-label="Stop" />
              </Row>
              <JogArea>
                <JogPad $cols={3}>
                  <PushButton $w={52} $h={40}>Y+</PushButton>
                  <PushButton $w={52} $h={40}>X-</PushButton>
                  <PushButton $w={52} $h={40}>Datum</PushButton>
                  <PushButton $w={52} $h={40}>X+</PushButton>
                  <PushButton $w={52} $h={40}>Y-</PushButton>
                </JogPad>
                <JogPad $cols={1}>
                  <PushButton $w={52} $h={40}>Z+</PushButton>
                  <PushButton $w={52} $h={40}>Datum</PushButton>
                  <PushButton $w={52} $h={40} aria-label="Z minus" />
                </JogPad>
              </JogArea>
            </Rows>
          </Group>

          <PlainGroup $open $pad="10px 8px 9px 42px">
            <PushButton $w={267} $h={34}>Mark Cut</PushButton>
          </PlainGroup>

          <PlainGroup $pad="14px 8px 10px 34px">
            <Rows>
              <PosRow>
                <PushButton $w={160} $h={30}>Read Current Pos:</PushButton>
                <PosLabel htmlFor="target-x">X=</PosLabel>
                <PosInput id="target-x" defaultValue="0.00" />
              </PosRow>
              <PosRow>
                <PushButton $w={160} $h={30}>Move to Pos:</PushButton>
                <PosLabel htmlFor="target-y">Y=</PosLabel>
                <PosInput id="target-y" defaultValue="0.00" />
              </PosRow>
            </Rows>
          </PlainGroup>
        </Panel>
      </Workspace>

      <BottomBar>
        <Grip $after={2} />
        {ALIGN.map(([label, d]) => (
          <ToolButton key={label} aria-label={label}><Icon stroke={OFF}><path d={d} /></Icon></ToolButton>
        ))}
        <Divider />
        {PLACE.map(([label, d, solid]) => (
          <ToolButton key={label} aria-label={label}>
            <Icon stroke={OFF}><path d={d} fill={solid ? OFF : "none"} /></Icon>
          </ToolButton>
        ))}
        <More aria-label="More alignment tools" $after={10}>{down}</More>
        <Grip />
        <Swatches>
          {SWATCHES.map((c) => <Swatch key={c} $color={c} aria-label={`Color ${c}`} />)}
        </Swatches>
        <More aria-label="More colors">{down}</More>
      </BottomBar>

      <StatusBar>
        <StatusCell $bare>Right</StatusCell>
        <StatusCell>Selected'Count:0</StatusCell>
        <StatusCell>X=26.22mm;Y=598.28mm</StatusCell>
        <StatusCell $raised>Worked Times:00:00:00</StatusCell>
        <StatusCell $raised>Laser Pos:X=0.00mm;Y=0.00mm</StatusCell>
        <StatusCell>Company</StatusCell>
      </StatusBar>
    </Window>
  );
}
